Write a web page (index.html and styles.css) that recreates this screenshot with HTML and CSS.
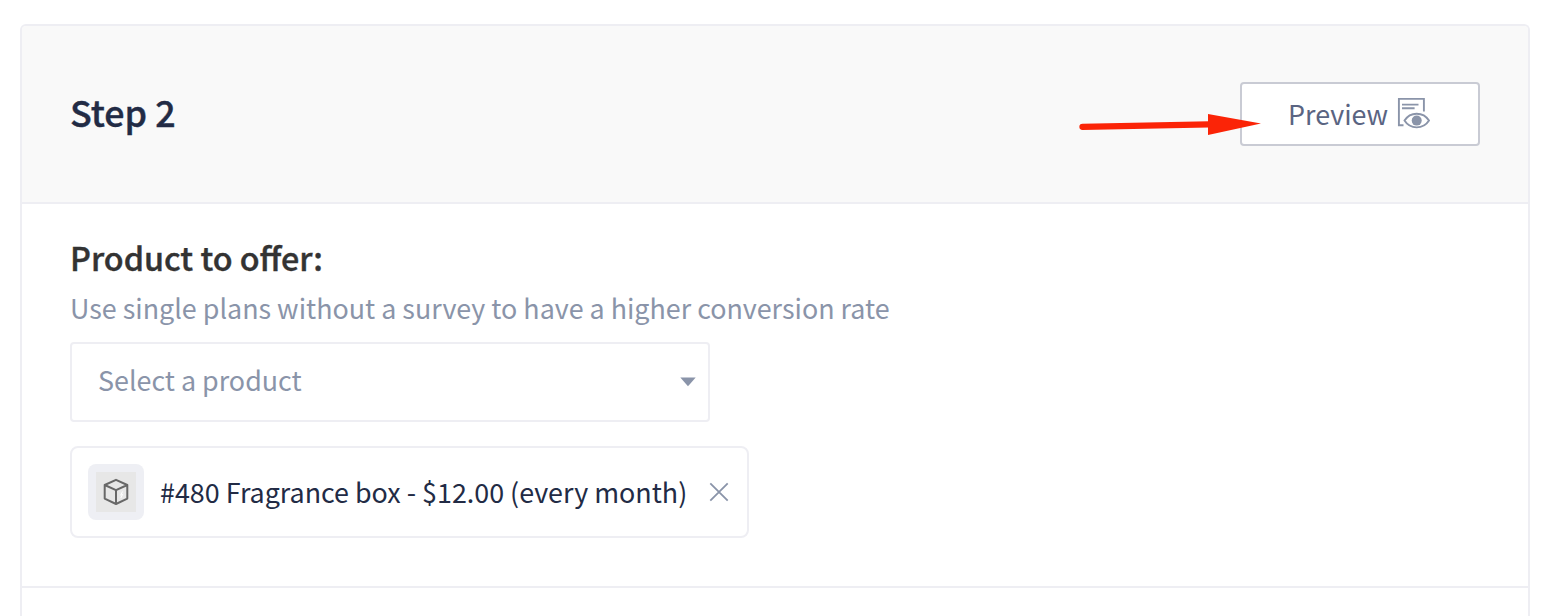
FILE: index.html
```html
<!DOCTYPE html>
<html lang="en">
<head>
<meta charset="utf-8">
<title>Step 2</title>
<link rel="stylesheet" href="styles.css">
</head>
<body>
<main class="card">
  <header class="card-header">
    <h1 class="title">Step 2</h1>
    <button class="preview" type="button">
      <span class="preview-label">Preview</span>
      <svg class="preview-icon" width="34" height="32" viewBox="0 0 34 32" fill="none" stroke="#8a94a9">
        <path d="M6.500 28.200H1.900V1.900H26.900V14.500" stroke-width="1.900"/>
        <path d="M5 7.600H21.500M5 11.200H17.600" stroke-width="1.900"/>
        <path d="M7.500 23.600C10.500 18.800 14.800 16.700 19.700 16.700S29 18.800 32 23.600C29 28.400 24.600 30.400 19.700 30.400S10.500 28.400 7.500 23.600Z" stroke-width="1.900"/>
        <circle cx="19.700" cy="23.600" r="5" fill="#8a94a9" stroke="none"/>
      </svg>
    </button>
    <svg class="arrow" width="184" height="24" viewBox="0 0 184 24" fill="#fb2407">
      <path d="M4.500 11.700 131 9.300V15.500L4.500 18A3.100 3.100 0 0 1 4.500 11.700Z"/>
      <path d="M130 2 183 11.500 130 23Z"/>
    </svg>
  </header>
  <section class="card-body">
    <h2 class="subtitle">Product to offer:</h2>
    <p class="hint">Use single plans without a survey to have a higher conversion rate</p>
    <div class="select">
      <span class="select-label">Select a product</span>
      <svg width="16" height="10" viewBox="0 0 16 10"><path d="M.3.500H15.700L8 9.300Z" fill="#8a94a9"/></svg>
    </div>
    <div class="product">
      <div class="thumb"><div class="thumb-inner">
        <svg width="28" height="28" viewBox="0 0 28 28" fill="none" stroke="#686868" stroke-width="2" stroke-linejoin="round">
          <path d="M14 1.800 25.300 7V20.600L14 26 2.700 20.600V7ZM2.700 7 14 12.200 25.300 7M14 12.200V26"/>
          <path d="M20.500 13.500 18.700 17.200 20.700 16.300 18.800 20" stroke="#fff" stroke-width="1"/>
        </svg>
      </div></div>
      <span class="product-name">#480 Fragrance box - $12.00 (every month)</span>
      <svg class="close" width="20" height="20" viewBox="0 0 20 20" stroke="#8a94a9" stroke-width="1.800"><path d="M1.300 1.300 18.700 18.700M18.700 1.300 1.300 18.700"/></svg>
    </div>
  </section>
</main>
</body>
</html>
```
FILE: styles.css
```css
* { box-sizing: border-box; }
html { background: #fff; }
body {
  margin: 0;
  padding: 24px 24px 0 20px;
  height: 616px;
  font-family: "Noto Sans CJK SC", "Noto Sans", sans-serif;
  font-size: 26.86px;
  white-space: nowrap;
}
svg { display: block; flex: none; }
h1, h2, p { margin: 0; }
.card {
  height: 592px;
  border: 2px solid #eeeef3;
  border-bottom: 0;
  border-radius: 6px 6px 0 0;
  overflow: hidden;
}
.card-header {
  position: relative;
  height: 178px;
  padding: 0 48px;
  display: flex;
  align-items: center;
  justify-content: space-between;
  background: #f9f9f9;
  border-bottom: 2px solid #eeeef3;
}
.title {
  padding-bottom: 7px;
  color: #222b45;
  font-size: 35.8px;
  line-height: 50px;
  font-weight: 500;
  -webkit-text-stroke: 0.4px #222b45;
}
.preview {
  display: flex;
  align-items: center;
  width: 240px;
  height: 64px;
  padding: 0 0 0 46px;
  border: 2px solid #c9cbd4;
  border-radius: 4px;
  background: #fff;
  color: #5a6482;
  font: inherit;
}
.preview-label { width: 100px; line-height: 40px; }
.preview-icon { margin: 0 0 2px 9px; }
.arrow { position: absolute; left: 1056px; top: 86px; }
.card-body {
  height: 384px;
  padding: 30px 48px 0;
  border-bottom: 2px solid #eeeef3;
}
.subtitle {
  color: #333;
  font-size: 32.3px;
  line-height: 46px;
  font-weight: 500;
  -webkit-text-stroke: 0.4px #333;
}
.hint { height: 62px; line-height: 56px; color: #8a94a9; }
.select {
  display: flex;
  align-items: center;
  justify-content: space-between;
  width: 640px;
  height: 80px;
  padding: 0 12px 0 26px;
  border: 2px solid #eeeef3;
  border-radius: 4px;
  color: #8a94a9;
}
.select-label { padding-bottom: 5px; }
.product {
  display: flex;
  align-items: center;
  width: 679px;
  height: 92px;
  margin-top: 24px;
  padding: 0 18px 0 16px;
  border: 2px solid #eeeef3;
  border-radius: 8px;
  color: #222b45;
}
.thumb {
  width: 56px;
  height: 56px;
  padding: 8px;
  border-radius: 8px;
  background: #eeeff4;
}
.thumb-inner {
  display: grid;
  place-items: center;
  width: 40px;
  height: 40px;
  background: #e7e7e7;
}
.product-name { margin-left: 16px; padding-bottom: 2px; }
.close { margin-left: auto; }
```
